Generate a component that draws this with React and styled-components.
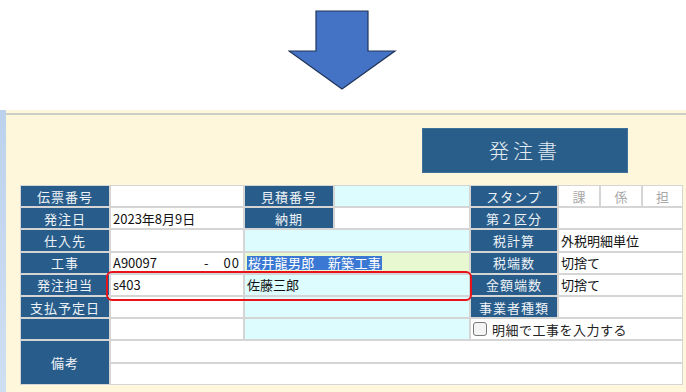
import React from 'react'
import styled, { createGlobalStyle } from 'styled-components'

const Global = createGlobalStyle`
  html, body {
    margin: 0;
    padding: 0;
    background: #ffffff;
  }
  body {
    width: 686px;
    height: 392px;
    overflow: hidden;
    font-family: "Noto Sans CJK JP", "Noto Sans", sans-serif;
  }
`

const Top = styled.div`
  height: 110px;
  display: flex;
  justify-content: center;
  align-items: flex-start;
  padding-top: 10px;
  box-sizing: border-box;
`

const Panel = styled.div`
  display: flex;
  height: 282px;
`

const SideStrip = styled.div`
  width: 6px;
  background: linear-gradient(#bcd2ec, #cfdff2);
`

const Main = styled.div`
  flex: 1;
  background: #fff7dc;
  padding-top: 3px;
`

const Rule = styled.div`
  height: 2px;
  background: #cdcdc8;
`

const Header = styled.div`
  display: flex;
  justify-content: flex-end;
  padding: 13px 58px 0 0;
`

const Title = styled.div`
  width: 206px;
  height: 45px;
  background: #2a5e8a;
  border: 1px solid #3f7199;
  box-sizing: border-box;
  color: #e4ebf2;
  font-size: 20px;
  font-weight: 300;
  letter-spacing: 4px;
  display: flex;
  align-items: center;
  justify-content: center;
`

const TableWrap = styled.div`
  position: relative;
  margin: 12px 0 0 14px;
  width: 663px;
`

const Grid = styled.div`
  display: grid;
  grid-template-columns: 88px 132px 88px 134px 86px 40px 40px 39px;
  grid-template-rows: repeat(9, 20.2px);
  gap: 2px;
  padding: 1px;
  background: #d5d5d5;
`

const Label = styled.div`
  background: #285d8b;
  color: #eef2f6;
  font-size: 13px;
  letter-spacing: 1px;
  display: flex;
  align-items: center;
  justify-content: center;
  grid-column: ${p => p.$col || 'auto'};
  grid-row: ${p => p.$row || 'auto'};
  white-space: nowrap;
`

const Value = styled.div`
  background: ${p => p.$bg || '#ffffff'};
  color: #111;
  font-size: 13px;
  display: flex;
  align-items: center;
  padding-left: 2px;
  grid-column: ${p => p.$span ? `span ${p.$span}` : 'auto'};
  white-space: nowrap;
  overflow: hidden;
`

const Stamp = styled.div`
  background: #ffffff;
  color: #a8a8a8;
  font-size: 13px;
  display: flex;
  align-items: center;
  justify-content: center;
`

const Code = styled.span`
  flex: 1;
`

const Suffix = styled.span`
  padding-right: 3px;
  letter-spacing: 1px;
`

const Selected = styled.span`
  background: #3a78d4;
  color: #ffffff;
  line-height: 14px;
  padding: 0 1px;
  letter-spacing: 0.3px;
`

const CheckRow = styled.label`
  background: #ffffff;
  grid-column: span 4;
  display: flex;
  align-items: center;
  gap: 5px;
  padding-left: 2px;
  font-size: 13px;
  color: #222;
  letter-spacing: 0.5px;
`

const Box = styled.span`
  width: 12px;
  height: 12px;
  border: 1px solid #7a7a7a;
  border-radius: 3px;
  background: #f4f4f4;
`

const Highlight = styled.div`
  position: absolute;
  left: 86px;
  top: 86px;
  width: 362px;
  height: 26px;
  border: 2px solid #e8121a;
  border-radius: 6px;
  pointer-events: none;
`

const Arrow = () => (
  <svg width="110" height="82" viewBox="0 0 110 82">
    <path
      d="M28 1 H80 V41 H107 L54 79 L1 41 H28 Z"
      fill="#4472c4"
      stroke="#1f3459"
      strokeWidth="1.2"
    />
  </svg>
)

const CYAN = '#dcfcfd'
const GREEN = '#e8f8d0'

export default function App() {
  return (
    <>
      <Global />
      <Top>
        <Arrow />
      </Top>
      <Panel>
        <SideStrip />
        <Main>
          <Rule />
          <Header>
            <Title>発注書</Title>
          </Header>
          <TableWrap>
            <Grid>
              <Label>伝票番号</Label>
              <Value />
              <Label>見積番号</Label>
              <Value $bg={CYAN} />
              <Label>スタンプ</Label>
              <Stamp>課</Stamp>
              <Stamp>係</Stamp>
              <Stamp>担</Stamp>

              <Label>発注日</Label>
              <Value>2023年8月9日</Value>
              <Label>納期</Label>
              <Value />
              <Label>第２区分</Label>
              <Value $span={3} />

              <Label>仕入先</Label>
              <Value />
              <Value $bg={CYAN} $span={2} />
              <Label>税計算</Label>
              <Value $span={3}>外税明細単位</Value>

              <Label>工事</Label>
              <Value>
                <Code>A90097</Code>
                <Suffix>-　00</Suffix>
              </Value>
              <Value $bg={GREEN} $span={2}>
                <Selected>桜井龍男郎　新築工事</Selected>
              </Value>
              <Label>税端数</Label>
              <Value $span={3}>切捨て</Value>

              <Label>発注担当</Label>
              <Value>s403</Value>
              <Value $bg={CYAN} $span={2}>佐藤三郎</Value>
              <Label>金額端数</Label>
              <Value $span={3}>切捨て</Value>

              <Label>支払予定日</Label>
              <Value />
              <Value $bg={CYAN} $span={2} />
              <Label>事業者種類</Label>
              <Value $span={3} />

              <Label />
              <Value />
              <Value $bg={CYAN} $span={2} />
              <CheckRow>
                <Box />
                明細で工事を入力する
              </CheckRow>

              <Label $row="span 2">備考</Label>
              <Value $span={7} />
              <Value $span={7} />
            </Grid>
            <Highlight />
          </TableWrap>
        </Main>
      </Panel>
    </>
  )
}
